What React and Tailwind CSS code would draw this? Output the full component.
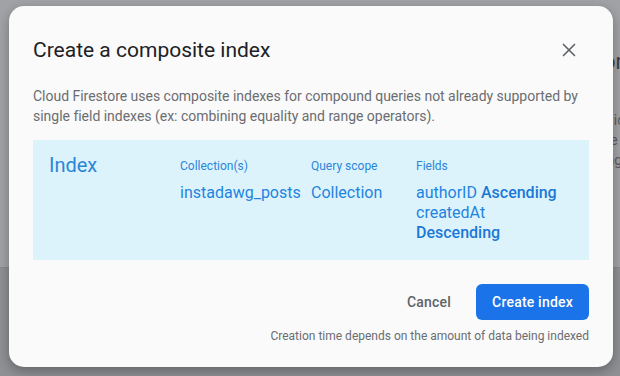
import React from "react";
import { X } from "lucide-react";

function Backdrop() {
  // Firestore page behind the modal, dimmed by the overlay
  return (
    <div className="absolute inset-0 flex flex-col">
      <div className="h-[268px] bg-[#a1a2a5] border-b border-[#8a8b8f] pl-[603px] pt-[48px] overflow-hidden text-[#3f4043]">
        <div className="text-[22px] leading-[28px] whitespace-nowrap">omposite</div>
        <div className="mt-[34px] text-[14px] leading-[20px] text-[#5b5c60] whitespace-nowrap">
          <div>click</div>
          <div>ce</div>
          <div>ing</div>
        </div>
      </div>
      <div className="flex-1 bg-[#8f9094]" />
    </div>
  );
}

function Column({ label, children, className }) {
  return (
    <div className={className}>
      <div className="text-[12px] leading-[16px] text-[#2a86d9]">{label}</div>
      <div className="mt-[9px] text-[16px] leading-[20px] text-[#1e84e0]">{children}</div>
    </div>
  );
}

export default function App() {
  return (
    <div
      className="relative w-[620px] h-[376px] overflow-hidden"
      style={{ fontFamily: "Roboto, 'Liberation Sans', sans-serif" }}
    >
      <Backdrop />

      {/* Dialog */}
      <div className="absolute left-[9px] top-[6px] w-[604px] h-[361px] bg-[#fafafa] rounded-[15px] shadow-[0_4px_12px_rgba(0,0,0,0.3)] px-[24px] pt-[24px]">
        <div className="flex items-center justify-between">
          <h2 className="text-[21px] leading-[32px] text-[#202124]">Create a composite index</h2>
          <button className="w-[40px] h-[40px] flex items-center justify-center text-[#5f6368]">
            <X size={22} strokeWidth={1.8} />
          </button>
        </div>

        <p className="mt-[16px] text-[14px] leading-[20px] text-[#6a6d71] tracking-[-0.02px]">
          Cloud Firestore uses composite indexes for compound queries not already supported by
          single field indexes (ex: combining equality and range operators).
        </p>

        {/* Index summary */}
        <div className="mt-[14px] h-[120px] bg-[#ddf3fc] flex pl-[16px]">
          <div className="w-[131px] pt-[11px] text-[20px] leading-[28px] text-[#2a86d9]">Index</div>
          <Column label="Collection(s)" className="w-[131px] pt-[18px]">
            instadawg_posts
          </Column>
          <Column label="Query scope" className="w-[105px] pt-[18px]">
            Collection
          </Column>
          <Column label="Fields" className="w-[150px] pt-[18px]">
            authorID <span className="font-medium text-[#1a78d6]">Ascending</span> createdAt{" "}
            <span className="font-medium text-[#1a78d6]">Descending</span>
          </Column>
        </div>

        {/* Actions */}
        <div className="mt-[24px] flex justify-end items-center gap-[9px]">
          <button className="h-[36px] px-[16px] rounded-[6px] text-[14px] font-medium tracking-[0.2px] text-[#5f6368]">
            Cancel
          </button>
          <button className="h-[36px] w-[113px] rounded-[6px] bg-[#1a73e8] text-[14px] font-medium tracking-[0.2px] text-white">
            Create index
          </button>
        </div>
        <div className="mt-[8px] text-right text-[12px] leading-[16px] text-[#6a6d71]">
          Creation time depends on the amount of data being indexed
        </div>
      </div>
    </div>
  );
}
